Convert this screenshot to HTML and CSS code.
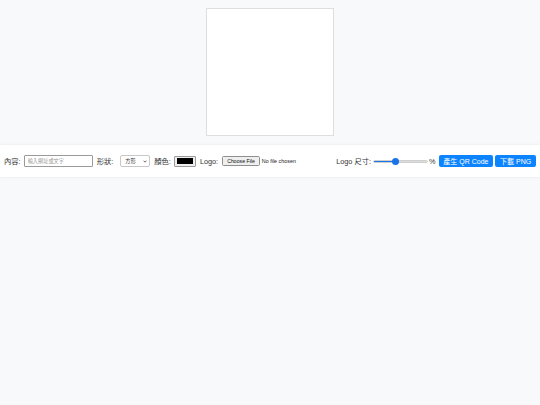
FILE: index.html
```html
<!DOCTYPE html>
<html lang="zh-Hant">
<head>
<meta charset="utf-8">
<title>QR Code 產生器</title>
<link rel="stylesheet" href="styles.css">
</head>
<body>
<div class="preview">
  <div class="canvas-box"></div>
</div>
<div class="toolbar">
  <div class="group">
    <label class="lbl">內容:</label>
    <input class="text-in" type="text" placeholder="輸入網址或文字">
    <label class="lbl">形狀:</label>
    <select class="sel"><option>方形</option><option>圓形</option></select>
    <label class="lbl">顏色:</label>
    <input class="color-in" type="color" value="#000000">
    <label class="lbl">Logo:</label>
    <input class="file-in" type="file">
  </div>
  <div class="group right">
    <label class="lbl">Logo 尺寸:</label>
    <input class="range-in" type="range" min="0" max="100" value="38">
    <span class="lbl pct">%</span>
    <button class="btn">產生 QR Code</button>
    <button class="btn btn-2">下載 PNG</button>
  </div>
</div>
</body>
</html>
```

FILE: styles.css
```css
* { box-sizing: border-box; }
html, body { margin: 0; padding: 0; }
body {
  background: #f8f9fa;
  font-family: "Liberation Sans", Arial, "Noto Sans CJK TC", sans-serif;
  width: 540px;
  height: 405px;
  overflow: hidden;
}
.preview {
  display: flex;
  justify-content: center;
  padding-top: 8px;
}
.canvas-box {
  width: 128px;
  height: 128px;
  background: #fff;
  border: 1px solid #dedede;
}
.toolbar {
  margin-top: 9px;
  height: 32px;
  background: #fff;
  box-shadow: 0 0 3px rgba(0,0,0,0.08);
  display: flex;
  align-items: center;
  justify-content: space-between;
  padding: 0 4px;
}
.group {
  display: flex;
  align-items: center;
}
.lbl {
  font-size: 7.3px;
  color: #333;
  white-space: nowrap;
}
.text-in {
  margin: 0 4px 0 3px;
  width: 69px;
  height: 12px;
  border: 1px solid #9a9a9a;
  border-radius: 1px;
  padding: 0 3px;
  font-size: 5.2px;
  font-family: inherit;
  outline: none;
}
.text-in::placeholder { color: #999; }
.sel {
  -webkit-appearance: none;
  appearance: none;
  margin: 0 4px 0 7px;
  width: 30px;
  height: 12px;
  font-size: 5.2px;
  font-family: inherit;
  border: 1px solid #c8c8c8;
  border-radius: 2px;
  padding: 0 0 0 4px;
  color: #333;
  background: #fff url("data:image/svg+xml,%3Csvg xmlns='http://www.w3.org/2000/svg' width='6' height='4' viewBox='0 0 6 4'%3E%3Cpath d='M0.8 0.8 L3 3 L5.2 0.8' fill='none' stroke='%23333' stroke-width='1.1'/%3E%3C/svg%3E") no-repeat right 2px center;
  background-size: 4px 3px;
}
.color-in {
  -webkit-appearance: none;
  appearance: none;
  margin: 0 4px 0 3px;
  width: 22px;
  height: 11px;
  padding: 1.5px 2px;
  border: 1px solid #9a9a9a;
  border-radius: 1px;
  background: #efefef;
  cursor: pointer;
}
.color-in::-webkit-color-swatch-wrapper { padding: 0; }
.color-in::-webkit-color-swatch { border: none; border-radius: 0; }
.file-in {
  margin-left: 4px;
  font-size: 5.4px;
  font-family: inherit;
  color: #222;
  width: 78px;
}
.file-in::file-selector-button {
  font-size: 5.2px;
  font-family: inherit;
  padding: 1px 4px;
  margin-right: 2px;
  border: 1px solid #8f8f8f;
  border-radius: 1.5px;
  background: #efefef;
  color: #111;
}
.range-in {
  -webkit-appearance: none;
  appearance: none;
  margin: 0 1px 0 2px;
  width: 55px;
  height: 8px;
  background: transparent;
}
.range-in::-webkit-slider-runnable-track {
  height: 3px;
  border-radius: 2px;
  background: linear-gradient(to right, #1a73e8 0 38%, #dcdcdc 38% 100%);
  border: 0.5px solid #cfcfcf;
}
.range-in::-webkit-slider-thumb {
  -webkit-appearance: none;
  width: 7px;
  height: 7px;
  margin-top: -2.5px;
  border-radius: 50%;
  background: #1a73e8;
  border: none;
}
.pct { margin-right: 3px; }
.btn {
  height: 12px;
  padding: 0 4.8px;
  border: none;
  border-radius: 2px;
  background: #0d84ff;
  color: #fff;
  font-size: 7px;
  font-family: inherit;
  cursor: pointer;
}
.btn-2 { margin-left: 2px; }
```
